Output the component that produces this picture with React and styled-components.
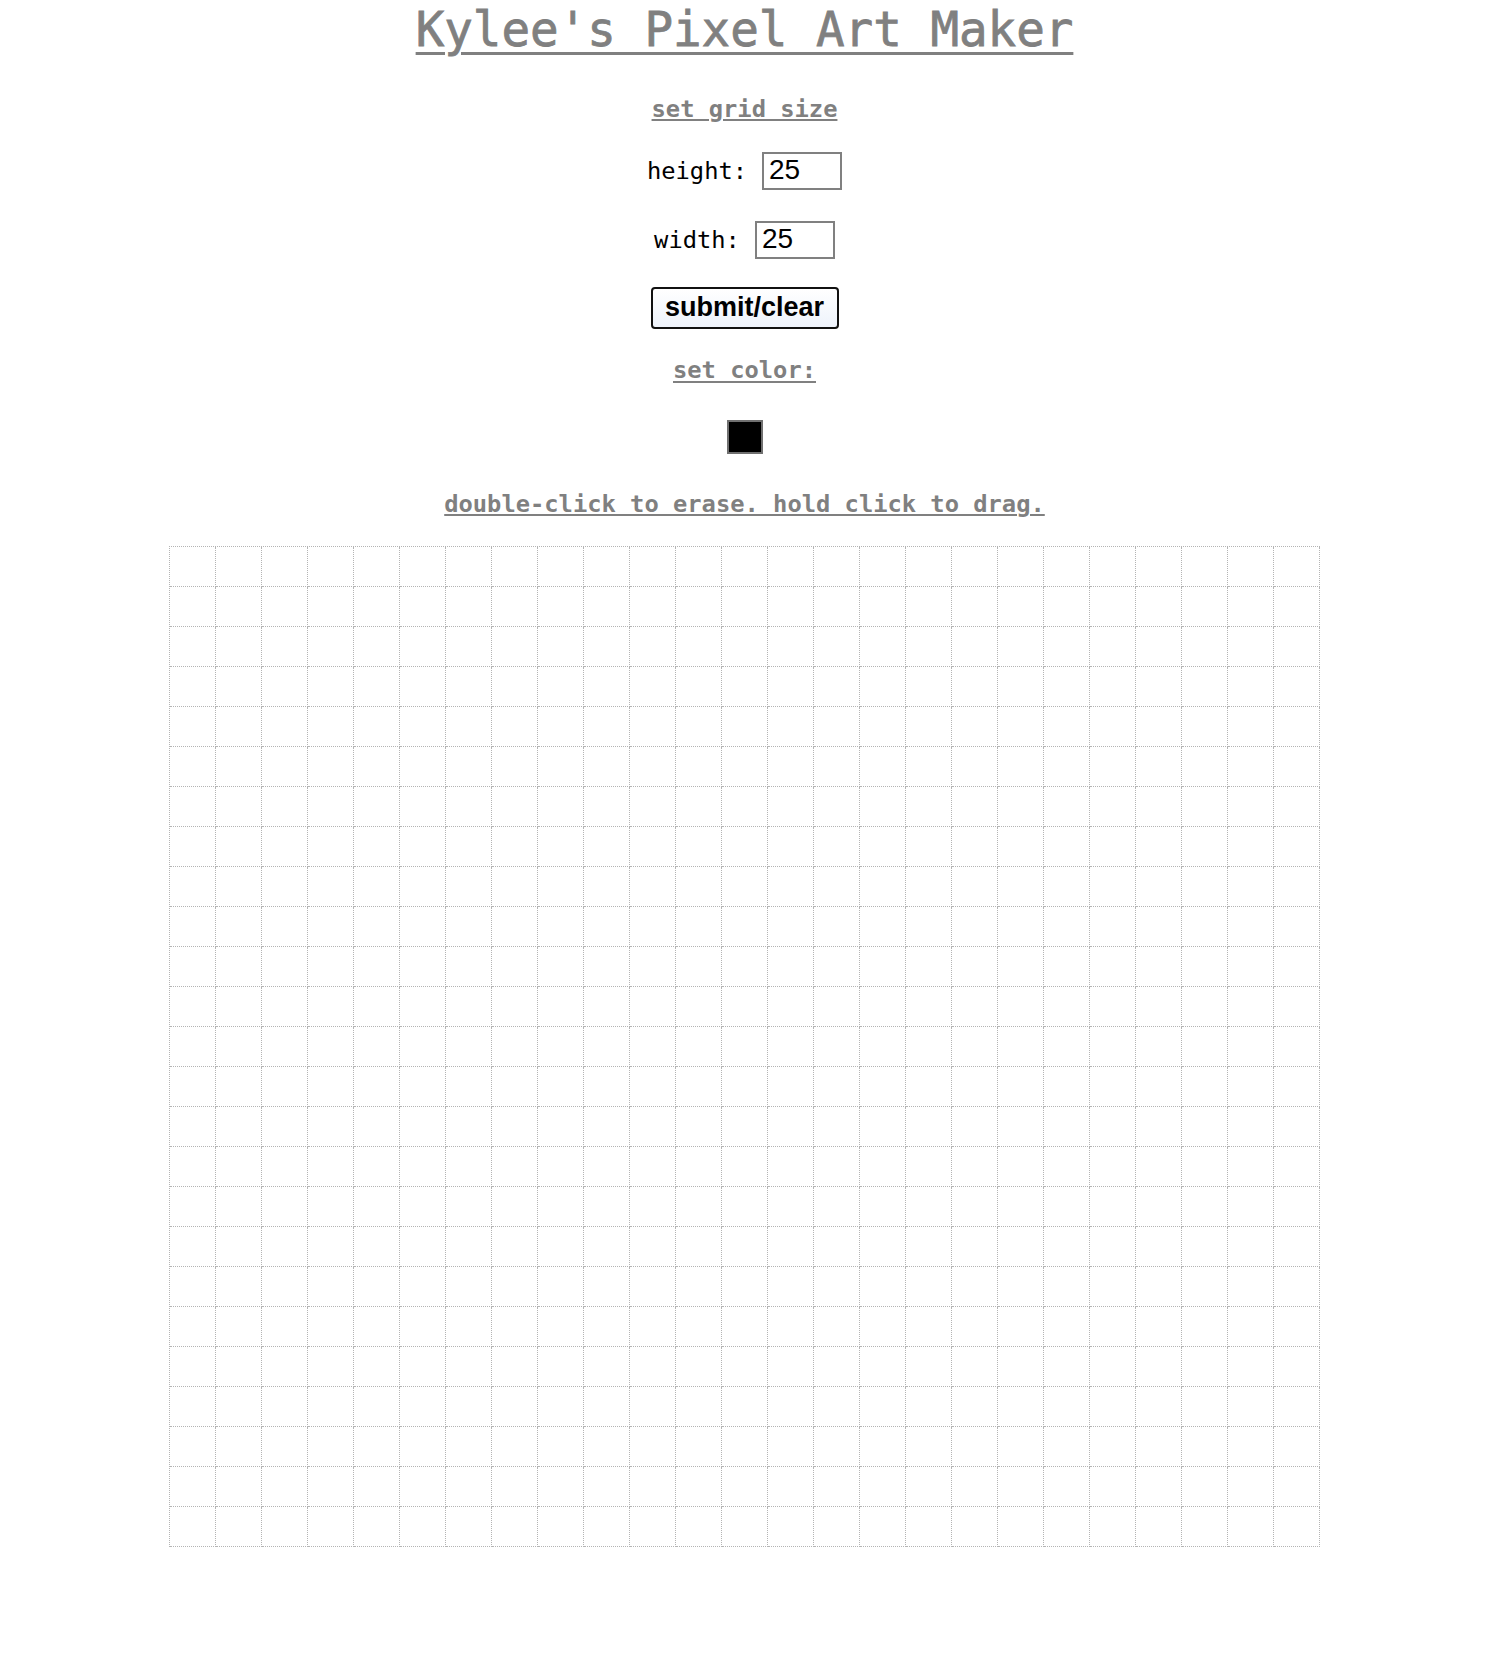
import React, { useState } from "react";
import styled, { createGlobalStyle } from "styled-components";

const GlobalStyle = createGlobalStyle`
  body {
    margin: 0 21px 0 8px;
    background: #fff;
    font-family: Consolas, "DejaVu Sans Mono", monospace;
    font-size: 23.75px;
  }
`;

const Page = styled.main`
  display: flex;
  flex-direction: column;
  align-items: center;
  padding-bottom: 110px;
`;

const Title = styled.h1`
  margin: 2px 0 0;
  font-size: 47.5px;
  font-weight: 400;
  line-height: 56px;
  color: #808080;
  -webkit-text-stroke: 0.8px #808080;
  text-decoration: underline;
  text-decoration-thickness: 3px;
  text-underline-offset: 6px;
`;

const Heading = styled.h2`
  margin: ${({ $top }) => $top}px 0 0;
  font-size: 23.75px;
  font-weight: 700;
  line-height: 28px;
  color: #808080;
  text-decoration: underline;
  text-decoration-thickness: 2px;
  text-underline-offset: ${({ $offset }) => $offset || 2}px;
`;

const Row = styled.div`
  display: flex;
  align-items: center;
  gap: 15px;
  margin-top: ${({ $top }) => $top}px;
`;

const Label = styled.label`
  line-height: 28px;
  color: #000;
`;

const NumberInput = styled.input`
  box-sizing: border-box;
  width: 80px;
  height: 38px;
  margin: 0;
  padding: 0 4px 3px 5px;
  border: 2px solid #808080;
  border-radius: 0;
  font-family: "Liberation Sans", Arial, sans-serif;
  font-size: 28px;
  color: #000;
  background: #fff;
  outline: none;
  appearance: textfield;

  &::-webkit-outer-spin-button,
  &::-webkit-inner-spin-button {
    -webkit-appearance: none;
    margin: 0;
  }
`;

const SubmitButton = styled.button`
  box-sizing: border-box;
  width: 188px;
  height: 42px;
  margin-top: 28px;
  padding: 0 0 2px;
  border: 2px solid #111;
  border-radius: 4px;
  background: linear-gradient(to bottom, #ffffff, #eef3fb);
  font-family: "Liberation Sans", Arial, sans-serif;
  font-size: 27px;
  font-weight: 700;
  line-height: 36px;
  color: #000;
  cursor: pointer;
`;

const ColorPicker = styled.input`
  box-sizing: border-box;
  width: 36px;
  height: 34px;
  margin: 36px 0 0;
  padding: 0;
  border: 2px solid #707070;
  background: #000;
  -webkit-appearance: none;
  appearance: none;
  cursor: pointer;

  &::-webkit-color-swatch-wrapper {
    padding: 0;
  }
  &::-webkit-color-swatch {
    border: none;
  }
`;

const Canvas = styled.div`
  display: grid;
  grid-template-columns: repeat(${({ $cols }) => $cols}, 46px);
  grid-auto-rows: 40px;
  margin-top: 28px;
  border-top: 1px dotted #b4b4b4;
  border-left: 1px dotted #b4b4b4;
`;

const Pixel = styled.div`
  border-right: 1px dotted #b4b4b4;
  border-bottom: 1px dotted #b4b4b4;
  background: ${({ $color }) => $color || "transparent"};
`;

export default function App() {
  const [rows, setRows] = useState(25);
  const [cols, setCols] = useState(25);
  const [color, setColor] = useState("#000000");
  const [size, setSize] = useState({ rows: 25, cols: 25 });
  const [pixels, setPixels] = useState({});

  const submit = (e) => {
    e.preventDefault();
    setSize({ rows: Number(rows) || 1, cols: Number(cols) || 1 });
    setPixels({});
  };

  return (
    <>
      <GlobalStyle />
      <Page>
        <Title>Kylee's Pixel Art Maker</Title>
        <Heading $top={37}>set grid size</Heading>
        <Row $top={29}>
          <Label htmlFor="rows">height:</Label>
          <NumberInput id="rows" type="number" value={rows} onChange={(e) => setRows(e.target.value)} />
        </Row>
        <Row $top={31}>
          <Label htmlFor="cols">width:</Label>
          <NumberInput id="cols" type="number" value={cols} onChange={(e) => setCols(e.target.value)} />
        </Row>
        <SubmitButton type="button" onClick={submit}>submit/clear</SubmitButton>
        <Heading $top={27} $offset={3}>set color:</Heading>
        <ColorPicker type="color" value={color} onChange={(e) => setColor(e.target.value)} />
        <Heading $top={36}>double-click to erase. hold click to drag.</Heading>
        <Canvas $cols={size.cols}>
          {Array.from({ length: size.rows * size.cols }, (_, i) => (
            <Pixel
              key={i}
              $color={pixels[i]}
              onClick={() => setPixels((p) => ({ ...p, [i]: color }))}
              onDoubleClick={() => setPixels((p) => ({ ...p, [i]: undefined }))}
            />
          ))}
        </Canvas>
      </Page>
    </>
  );
}
